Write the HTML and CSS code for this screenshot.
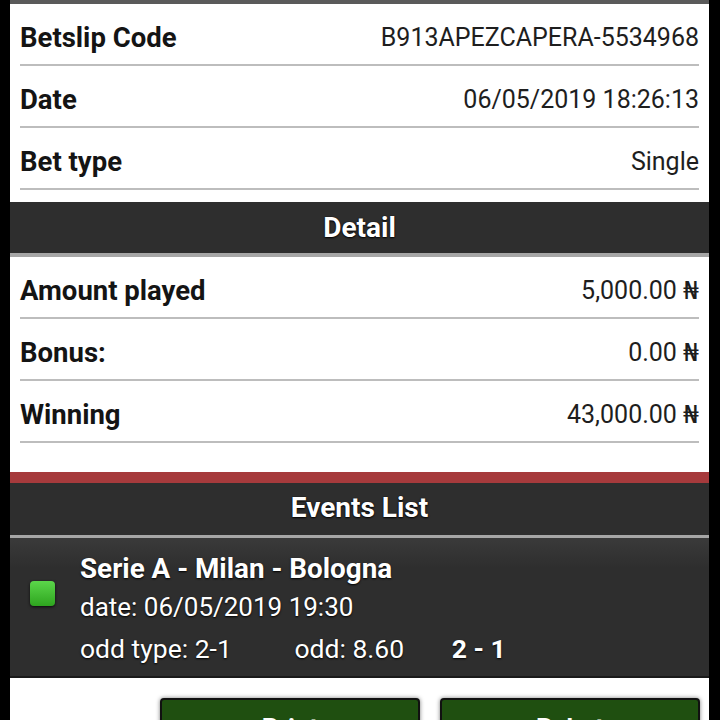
FILE: index.html
```html
<!DOCTYPE html>
<html lang="en">
<head>
<meta charset="UTF-8" />
<meta name="viewport" content="width=device-width, initial-scale=1" />
<title>Betslip</title>
<link rel="stylesheet" href="styles.css">
</head>
<body>

<div class="slip">
  <div class="row"><span class="label">Betslip Code</span><span class="value">B913APEZCAPERA-5534968</span></div>
  <div class="row"><span class="label">Date</span><span class="value">06/05/2019 18:26:13</span></div>
  <div class="row"><span class="label">Bet type</span><span class="value">Single</span></div>

  <div class="section-title">Detail</div>

  <div class="row"><span class="label">Amount played</span><span class="value">5,000.00 <span class="naira">₦</span></span></div>
  <div class="row"><span class="label">Bonus:</span><span class="value">0.00 <span class="naira">₦</span></span></div>
  <div class="row"><span class="label">Winning</span><span class="value">43,000.00 <span class="naira">₦</span></span></div>

  <div class="events">
    <div class="section-title">Events List</div>
    <div class="event">
      <div class="event-mark"></div>
      <div class="event-info">
        <div class="event-name">Serie A - Milan - Bologna</div>
        <div class="event-date">date: 06/05/2019 19:30</div>
        <div class="event-odds">
          <span class="odd-type">odd type: 2-1</span>
          <span class="odd">odd: 8.60</span>
          <span class="score">2 - 1</span>
        </div>
      </div>
    </div>
  </div>

  <div class="buttons-row">
    <button>Print</button>
    <button>Rebet</button>
  </div>
</div>

</body>
</html>
```

FILE: styles.css
```css
body {
  background: #000;
  margin: 0;
  font-family: Roboto, "DejaVu Sans", sans-serif;
  overflow: hidden;
}
.slip {
  background: #fff;
  margin: 0 11px 0 10px;
  border-top: 4px solid #5a5a5a;
  min-height: 760px;
}
.row {
  display: flex;
  align-items: center;
  justify-content: space-between;
  margin: 0 10px;
  border-bottom: 2px solid #bdbdbd;
  font-size: 25px;
  padding-top: 6px;
  box-sizing: border-box;
  height: 62px;
}
.label {
  font-weight: 700;
  font-size: 27.5px;
  color: #141414;
}
.value {
  color: #1e1e1e;
}
.naira {
  font-family: "DejaVu Sans", sans-serif;
  font-size: 25px;
}
.section-title {
  background: #2e2e2e;
  color: #fff;
  font-weight: 700;
  font-size: 28px;
  text-align: center;
  height: 51px;
  line-height: 51px;
  border-bottom: 4px solid #a6a6a6;
  text-shadow: 0 1px 2px #000, 0 0 1px #000;
  margin-top: 12px;
}
.events {
  margin-top: 29px;
  border-top: 11px solid #a63a3c;
}
.events .section-title {
  margin-top: 0;
  height: 52px;
  line-height: 50px;
  border-bottom-width: 3px;
}
.event {
  display: flex;
  gap: 25px;
  padding: 12px 20px 6px;
  background: linear-gradient(#3a3a3a, #2e2e2e 30px, #2e2e2e);
  border-bottom: 2px solid #1a1a1a;
  height: 140px;
  box-sizing: border-box;
  color: #fff;
  text-shadow: 0 1px 2px #000;
}
.event-mark {
  width: 25px;
  height: 25px;
  margin-top: 31px;
  border-radius: 4px;
  background: linear-gradient(#5bd64a, #2ea51f);
  box-shadow: 0 1px 3px rgba(0,0,0,0.8);
}
.event-name {
  font-weight: 700;
  font-size: 27.8px;
  line-height: 38px;
}
.event-date {
  font-size: 26px;
  line-height: 38px;
}
.event-odds {
  font-size: 26.5px;
  line-height: 46px;
}
.odd {
  margin-left: 56px;
}
.score {
  margin-left: 41px;
  font-weight: 700;
}
.buttons-row {
  display: flex;
  justify-content: flex-end;
  gap: 20px;
  padding: 20px 9px 0;
}
.buttons-row button {
  width: 260px;
  height: 52px;
  padding-top: 8px;
  background: #1f4f10;
  border: 2px solid #111;
  border-radius: 4px;
  box-shadow: 0 0 4px rgba(0,0,0,0.5);
  color: #fff;
  font-family: Roboto, sans-serif;
  font-weight: 700;
  font-size: 26px;
}
```
